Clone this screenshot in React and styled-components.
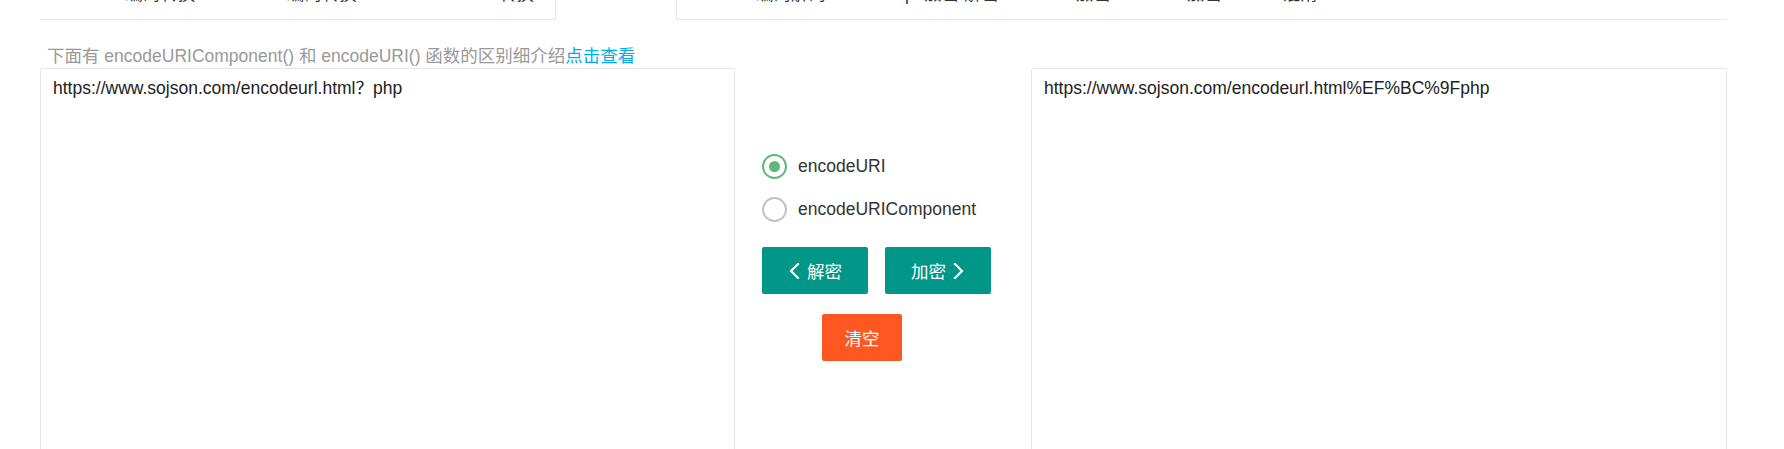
import styled, { createGlobalStyle } from "styled-components"
import { useState } from "react";

const GlobalStyle = createGlobalStyle`
    html, body {
        margin: 0;
        padding: 0;
        background: #fff;
        overflow: hidden;
    }
    body {
        font-family: "Liberation Sans", "Noto Sans CJK SC", sans-serif;
        color: #333;
    }
`;

const Page = styled.div`
    padding: 0 57px 0 40px;
    height: 449px;
    overflow: hidden;
`;

const TabBar = styled.ul`
    display: flex;
    margin: -21px 0 0 0;
    padding: 0;
    list-style: none;
    height: 40px;
    border-bottom: 1px solid #e6e6e6;
`;

const Tab = styled.li`
    padding: 0 ${props => props.pad || 19}px;
    line-height: 30px;
    font-size: 17.5px;
    color: #333;
    white-space: nowrap;
    box-sizing: border-box;
    border: 1px solid ${props => props.active ? "#e6e6e6" : "transparent"};
    border-top: none;
    border-bottom: none;
    background: #fff;
    height: ${props => props.active ? "41px" : "40px"};
`;

const Intro = styled.p`
    margin: 24px 0 0 0;
    padding-left: 7px;
    font-size: 17.5px;
    line-height: 24px;
    color: #999;
    white-space: nowrap;

    & a {
        color: #01AAED;
        text-decoration: none;
    }
`;

const Row = styled.div`
    display: flex;
    align-items: flex-start;
`;

const TextBox = styled.textarea`
    box-sizing: border-box;
    width: ${props => props.w}px;
    height: 520px;
    border: 1px solid #e6e6e6;
    border-radius: 2px;
    padding: 7px 12px;
    margin: 0;
    font-family: "Liberation Sans", "Noto Sans CJK SC", sans-serif;
    font-size: 17.5px;
    line-height: 24px;
    color: #222;
    resize: none;
    outline: none;
    background: #fff;
`;

const Middle = styled.div`
    width: 296px;
    flex: none;
    box-sizing: border-box;
    padding: 86px 0 0 27px;
    display: flex;
    flex-direction: column;
`;

const RadioRow = styled.label`
    display: flex;
    align-items: center;
    height: 25px;
    margin-bottom: 18px;
    cursor: pointer;
    font-size: 17.5px;
    color: #333;

    &:nth-child(2) {
        margin-bottom: 25px;
    }
`;

const Circle = styled.span`
    box-sizing: border-box;
    width: 25px;
    height: 25px;
    border-radius: 50%;
    border: 2px solid ${props => props.checked ? "#5FB878" : "#c2c2c2"};
    display: flex;
    align-items: center;
    justify-content: center;
    margin-right: 11px;

    &::after {
        content: "";
        width: 11px;
        height: 11px;
        border-radius: 50%;
        background: #5FB878;
        display: ${props => props.checked ? "block" : "none"};
    }
`;

const BtnRow = styled.div`
    display: flex;
    gap: 17px;
`;

const Button = styled.button`
    box-sizing: border-box;
    height: 47px;
    width: ${props => props.w}px;
    border: none;
    border-radius: 2px;
    background: ${props => props.bg};
    color: #fff;
    font-family: "Liberation Sans", "Noto Sans CJK SC", sans-serif;
    font-size: 17.5px;
    display: flex;
    align-items: center;
    justify-content: center;
    gap: 7px;
    padding: 0;
    cursor: pointer;
`;

const ClearButton = styled(Button)`
    margin: 20px 0 0 60px;
`;

function Chevron({ dir }) {
    const d = dir === "left" ? "M10 1 L3 8 L10 15" : "M2 1 L9 8 L2 15"
    return (
        <svg width="12" height="16" viewBox="0 0 12 16" fill="none">
            <path d={d} stroke="#fff" strokeWidth="2.2" strokeLinecap="square" strokeLinejoin="miter" />
        </svg>
    )
}

const tabs = ["Unicode编码转换", "UTF-8编码转换", "Native/ASCII转换", "UrlEncode", "Base64编码解码", "Escape加密/解密", "MD5加密", "SHA加密", "JS混淆"]

function App() {
    const [mode, setMode] = useState("uri")

    return (
        <Page>
            <GlobalStyle />
            <TabBar>
                {tabs.map((t, i) => <Tab key={t} pad={i < 3 ? 20 : 19} active={t === "UrlEncode"}>{t}</Tab>)}
            </TabBar>
            <Intro>下面有 encodeURIComponent() 和 encodeURI() 函数的区别细介绍<a href="#">点击查看</a></Intro>
            <Row>
                <TextBox w={695} defaultValue="https://www.sojson.com/encodeurl.html？php" />
                <Middle>
                    <RadioRow onClick={() => setMode("uri")}>
                        <Circle checked={mode === "uri"} />encodeURI
                    </RadioRow>
                    <RadioRow onClick={() => setMode("component")}>
                        <Circle checked={mode === "component"} />encodeURIComponent
                    </RadioRow>
                    <BtnRow>
                        <Button w={106} bg="#009688"><Chevron dir="left" />解密</Button>
                        <Button w={106} bg="#009688">加密<Chevron dir="right" /></Button>
                    </BtnRow>
                    <ClearButton w={80} bg="#FF5722">清空</ClearButton>
                </Middle>
                <TextBox w={696} defaultValue="https://www.sojson.com/encodeurl.html%EF%BC%9Fphp" />
            </Row>
        </Page>
    )
}

export default App
